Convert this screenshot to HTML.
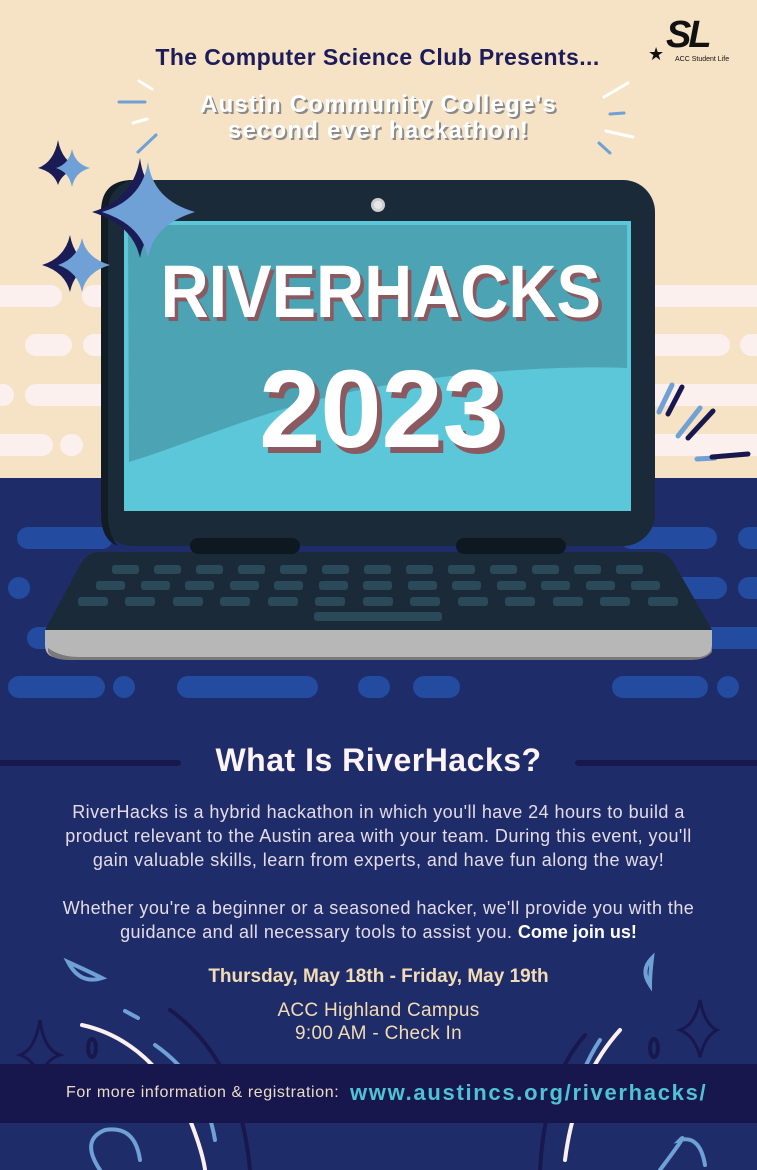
<!DOCTYPE html>
<html><head><meta charset="utf-8"><style>
*{margin:0;padding:0;box-sizing:border-box}
body{width:757px;height:1170px;overflow:hidden;background:#1e2d69;font-family:"Liberation Sans",sans-serif;position:relative}
.a{position:absolute}
.c{position:absolute;left:0;width:757px;text-align:center}
</style></head><body>
<svg class="a" style="left:0;top:0" width="757" height="1170" viewBox="0 0 757 1170">
<rect x="0" y="0" width="757" height="478" fill="#f6e2c4"/>
<g fill="#fbf0ee">
<rect x="-10" y="285" width="72" height="22" rx="11"/><rect x="82" y="285" width="40" height="22" rx="11"/>
<rect x="25" y="334" width="47" height="22" rx="11"/><rect x="83" y="334" width="40" height="22" rx="11"/>
<rect x="-8" y="384" width="22" height="22" rx="11"/><rect x="25" y="384" width="90" height="22" rx="11"/>
<rect x="-10" y="434" width="63" height="22" rx="11"/><rect x="60" y="434" width="23" height="22" rx="11"/>
<rect x="640" y="285" width="130" height="22" rx="11"/>
<rect x="640" y="334" width="90" height="22" rx="11"/><rect x="740" y="334" width="30" height="22" rx="11"/>
<rect x="640" y="384" width="130" height="22" rx="11"/>
<rect x="640" y="434" width="130" height="22" rx="11"/>
</g>
<g fill="#234ba0">
<rect x="17" y="527" width="96" height="22" rx="11"/><rect x="620" y="527" width="97" height="22" rx="11"/><rect x="738" y="527" width="30" height="22" rx="11"/>
<rect x="8" y="577" width="22" height="22" rx="11"/><rect x="660" y="577" width="67" height="22" rx="11"/><rect x="738" y="577" width="30" height="22" rx="11"/>
<rect x="27" y="627" width="60" height="22" rx="11"/><rect x="680" y="627" width="90" height="22" rx="11"/>
<rect x="8" y="676" width="97" height="22" rx="11"/><rect x="113" y="676" width="22" height="22" rx="11"/>
<rect x="177" y="676" width="141" height="22" rx="11"/><rect x="358" y="676" width="32" height="22" rx="11"/>
<rect x="413" y="676" width="47" height="22" rx="11"/><rect x="612" y="676" width="96" height="22" rx="11"/><rect x="717" y="676" width="22" height="22" rx="11"/>
</g>
<rect x="101" y="180" width="554" height="366" rx="32" fill="#1b2a38"/>
<path d="M133 180 Q101 180 101 212 V514 Q101 540 118 546 Q108 535 108 514 V212 Q108 186 133 180Z" fill="#111c25"/>
<circle cx="378" cy="205" r="7" fill="#cfcfcf"/><circle cx="378" cy="205" r="4" fill="#e6e6e6"/>
<rect x="124" y="221" width="507" height="290" fill="#5bc7d8"/>
<path d="M128 225 H627 V368 C560 365 450 372 360 390 C260 410 200 440 129 462 Z" fill="#4ba3b4"/>
<path d="M100 552 H655 Q668 552 675 565 L712 630 V648 Q712 658 700 658 H60 Q45 658 45 645 V630 L80 565 Q87 552 100 552Z" fill="#1b2a38"/>
<path d="M45 630 H712 V645 Q712 658 698 658 H60 Q45 658 45 645 Z" fill="#b7b7b7"/>
<path d="M48 648 Q60 657 80 657 H700 Q710 655 712 648 V652 Q706 660 690 660 H70 Q52 660 48 652Z" fill="#7a7a7a"/>
<rect x="190" y="538" width="110" height="16" rx="8" fill="#0e1820"/>
<rect x="456" y="538" width="110" height="16" rx="8" fill="#0e1820"/>
<g fill="#2a4a5a">
<rect x="112" y="565" width="27" height="9" rx="3"/><rect x="154" y="565" width="27" height="9" rx="3"/><rect x="196" y="565" width="27" height="9" rx="3"/><rect x="238" y="565" width="27" height="9" rx="3"/><rect x="280" y="565" width="27" height="9" rx="3"/><rect x="322" y="565" width="27" height="9" rx="3"/><rect x="364" y="565" width="27" height="9" rx="3"/><rect x="406" y="565" width="27" height="9" rx="3"/><rect x="448" y="565" width="27" height="9" rx="3"/><rect x="490" y="565" width="27" height="9" rx="3"/><rect x="532" y="565" width="27" height="9" rx="3"/><rect x="574" y="565" width="27" height="9" rx="3"/><rect x="616" y="565" width="27" height="9" rx="3"/>
<rect x="96" y="581" width="29" height="9" rx="3"/><rect x="141" y="581" width="29" height="9" rx="3"/><rect x="185" y="581" width="29" height="9" rx="3"/><rect x="230" y="581" width="29" height="9" rx="3"/><rect x="274" y="581" width="29" height="9" rx="3"/><rect x="319" y="581" width="29" height="9" rx="3"/><rect x="363" y="581" width="29" height="9" rx="3"/><rect x="408" y="581" width="29" height="9" rx="3"/><rect x="452" y="581" width="29" height="9" rx="3"/><rect x="497" y="581" width="29" height="9" rx="3"/><rect x="541" y="581" width="29" height="9" rx="3"/><rect x="586" y="581" width="29" height="9" rx="3"/><rect x="631" y="581" width="29" height="9" rx="3"/>
<rect x="78" y="597" width="30" height="9" rx="3"/><rect x="125" y="597" width="30" height="9" rx="3"/><rect x="173" y="597" width="30" height="9" rx="3"/><rect x="220" y="597" width="30" height="9" rx="3"/><rect x="268" y="597" width="30" height="9" rx="3"/><rect x="315" y="597" width="30" height="9" rx="3"/><rect x="363" y="597" width="30" height="9" rx="3"/><rect x="410" y="597" width="30" height="9" rx="3"/><rect x="458" y="597" width="30" height="9" rx="3"/><rect x="505" y="597" width="30" height="9" rx="3"/><rect x="553" y="597" width="30" height="9" rx="3"/><rect x="600" y="597" width="30" height="9" rx="3"/><rect x="648" y="597" width="30" height="9" rx="3"/>
<rect x="314" y="612" width="128" height="9" rx="3"/>
</g>
<path d="M58 140 Q62 162 80 168 Q62 172 58 185 Q54 172 38 168 Q54 162 58 140Z" fill="#1b1b55"/>
<path d="M72 149 Q75 164 90 168 Q75 172 72 187 Q69 172 56 168 Q69 164 72 149Z" fill="#6fa0d6"/>
<path d="M140 158 Q145 200 190 212 Q145 225 140 258 Q133 225 92 212 Q133 200 140 158Z" fill="#1b1b55"/>
<path d="M148 162 Q153 200 195 212 Q153 225 148 258 Q142 225 102 212 Q142 200 148 162Z" fill="#6fa0d6"/>
<path d="M70 235 Q74 258 92 265 Q74 272 70 292 Q65 272 42 265 Q65 258 70 235Z" fill="#1b1b55"/>
<path d="M82 238 Q86 258 110 265 Q86 272 82 292 Q78 272 58 265 Q78 258 82 238Z" fill="#6fa0d6"/>
<g stroke-linecap="round" stroke-width="3">
<line x1="139" y1="81" x2="152" y2="89" stroke="#fff"/><line x1="119" y1="102" x2="145" y2="102" stroke="#6fa0d6"/>
<line x1="133" y1="123" x2="147" y2="119" stroke="#fff"/><line x1="138" y1="152" x2="156" y2="135" stroke="#6fa0d6"/>
<line x1="604" y1="97" x2="628" y2="83" stroke="#fff"/><line x1="610" y1="114" x2="624" y2="113" stroke="#6fa0d6"/>
<line x1="606" y1="131" x2="633" y2="137" stroke="#fff"/><line x1="599" y1="143" x2="610" y2="153" stroke="#6fa0d6"/>
</g>
<g stroke-linecap="round" stroke-width="5">
<line x1="659" y1="412" x2="672" y2="385" stroke="#6fa0d6"/><line x1="668" y1="414" x2="682" y2="387" stroke="#18184f"/>
<line x1="678" y1="436" x2="700" y2="408" stroke="#6fa0d6"/><line x1="688" y1="438" x2="713" y2="411" stroke="#18184f"/>
<line x1="697" y1="459" x2="715" y2="458" stroke="#6fa0d6"/><line x1="712" y1="457" x2="748" y2="454" stroke="#18184f"/>
</g>
<line x1="0" y1="763" x2="178" y2="763" stroke="#18184f" stroke-width="6" stroke-linecap="round"/>
<line x1="578" y1="763" x2="757" y2="763" stroke="#18184f" stroke-width="6" stroke-linecap="round"/>
<g fill="none" stroke-linecap="round" stroke-width="4">
<path d="M82 1025 Q150 1040 190 1120 Q210 1170 205 1190" stroke="#fbf0ee"/>
<path d="M155 1045 Q205 1080 215 1140" stroke="#6fa0d6"/>
<path d="M170 1010 Q240 1060 250 1170" stroke="#18184f"/>
<path d="M68 962 Q90 972 102 978 Q80 985 68 962Z" stroke="#6fa0d6"/>
<path d="M125 1011 L138 1018" stroke="#6fa0d6"/>
<path d="M20 1055 Q35 1050 40 1020 Q44 1050 60 1055 Q44 1060 40 1080 Q35 1060 20 1055Z" stroke="#18184f" stroke-width="3"/>
<ellipse cx="92" cy="1048" rx="4" ry="9" stroke="#18184f"/>
<path d="M100 1170 Q80 1140 105 1130 Q135 1125 140 1160" stroke="#6fa0d6"/>
<path d="M620 1030 Q575 1080 565 1160" stroke="#fbf0ee"/>
<path d="M600 1040 Q580 1070 572 1110" stroke="#6fa0d6"/>
<path d="M585 1035 Q545 1080 540 1170" stroke="#18184f"/>
<path d="M650 985 Q640 970 652 958 Q650 975 650 985Z" stroke="#6fa0d6"/>
<path d="M680 1030 Q695 1025 700 1000 Q705 1025 717 1030 Q705 1036 700 1057 Q695 1036 680 1030Z" stroke="#18184f" stroke-width="3"/>
<ellipse cx="654" cy="1048" rx="4" ry="9" stroke="#18184f"/>
<path d="M660 1170 Q690 1130 680 1140 Q700 1135 705 1165" stroke="#6fa0d6"/>
</g>
<rect x="0" y="1064" width="757" height="59" fill="#17174d"/>
</svg>

<div class="a" style="left:666px;top:16px;font:italic bold 38px/38px 'Liberation Sans',sans-serif;color:#111;letter-spacing:-3px">SL</div>
<div class="a" style="left:648px;top:44px;font-size:18px;color:#111">★</div>
<div class="a" style="left:675px;top:56px;font-size:7px;color:#111">ACC Student Life</div>

<div class="c" style="top:44px;font-size:23px;font-weight:bold;color:#1c1c5a;letter-spacing:0.4px;padding-right:2px">The Computer Science Club Presents...</div>
<div class="c" style="top:92px;font-size:24px;line-height:26px;font-weight:bold;color:#fff;text-shadow:2px 2px 0 #8a8a8a;letter-spacing:1.2px">Austin Community College's<br>second ever hackathon!</div>

<div class="c" style="top:252px;font-size:74px;line-height:80px;font-weight:bold;color:#fff;text-shadow:4px 4px 0 #8a5a60;transform:scaleX(0.9);padding-left:5px">RIVERHACKS</div>
<div class="c" style="top:352px;font-size:110px;line-height:115px;font-weight:bold;color:#fff;text-shadow:5px 6px 0 #8a5a60;padding-left:6px">2023</div>

<div class="c" style="top:742px;font-size:32px;font-weight:bold;color:#fdf3f3;letter-spacing:0.5px">What Is RiverHacks?</div>
<div class="c" style="top:800px;font-size:18px;line-height:24px;color:#e4dbe6;letter-spacing:0.45px">RiverHacks is a hybrid hackathon in which you'll have 24 hours to build a<br>product relevant to the Austin area with your team. During this event, you'll<br>gain valuable skills, learn from experts, and have fun along the way!<br><br>Whether you're a beginner or a seasoned hacker, we'll provide you with the<br>guidance and all necessary tools to assist you. <b style="color:#fff;letter-spacing:0">Come join us!</b></div>

<div class="c" style="top:966px;font-size:19px;font-weight:bold;color:#f3dcb4">Thursday, May 18th - Friday, May 19th</div>
<div class="c" style="top:999px;font-size:19px;line-height:23px;color:#f3dcb4;letter-spacing:0.3px">ACC Highland Campus<br>9:00 AM - Check In</div>

<div class="a" style="left:66px;top:1084px;font-size:16px;color:#eadcc6;letter-spacing:0.6px">For more information &amp; registration:</div>
<div class="a" style="left:350px;top:1080px;font-size:22px;font-weight:bold;color:#4fc3d3;letter-spacing:1.7px">www.austincs.org/riverhacks/</div>
</body></html>
